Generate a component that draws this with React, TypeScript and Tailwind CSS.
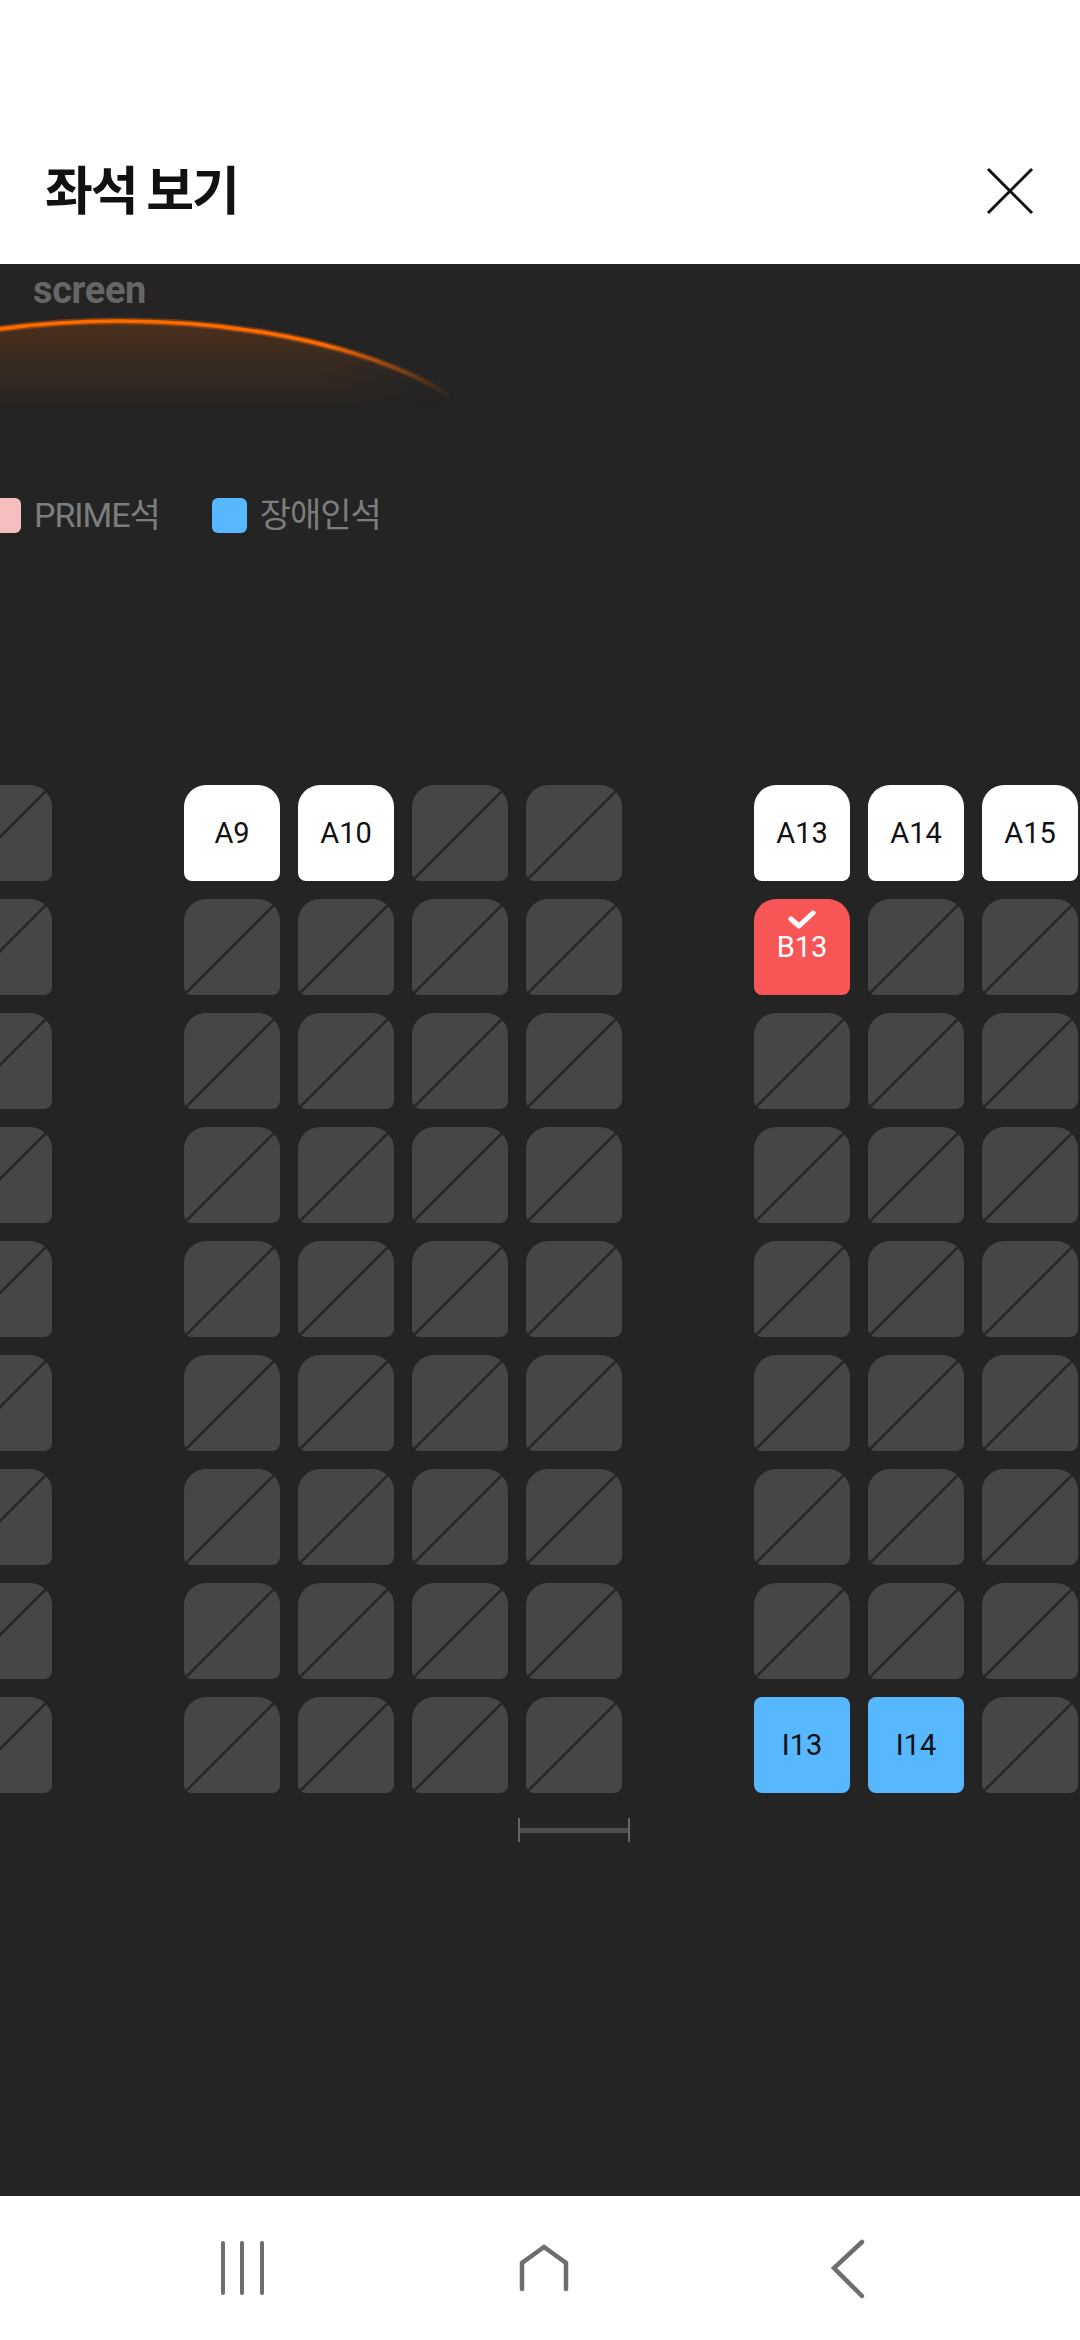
import { useState } from "react";

type SeatState = "off" | "open" | "picked" | "wheel";

const ROWS = ["A", "B", "C", "D", "E", "F", "G", "H", "I"];
// null = aisle slot
const COLS: (number | null)[] = [8, null, 9, 10, 11, 12, null, 13, 14, 15];

const OPEN = ["A9", "A10", "A13", "A14", "A15"];
const WHEEL = ["I13", "I14"];

function stateOf(id: string, picked: string[]): SeatState {
  if (picked.includes(id)) return "picked";
  if (WHEEL.includes(id)) return "wheel";
  if (OPEN.includes(id)) return "open";
  return "off";
}

function Seat({ id, state, onPick }: { id: string; state: SeatState; onPick: (id: string) => void }) {
  if (state === "off") {
    return (
      <div className="relative h-[96px] w-[96px] shrink-0 overflow-hidden rounded-t-[22px] rounded-b-[8px] bg-[#464646]">
        <svg className="absolute inset-0" width="96" height="96" viewBox="0 0 96 96">
          <line x1="0" y1="96" x2="96" y2="0" stroke="#262626" strokeWidth="2.5" />
        </svg>
      </div>
    );
  }

  if (state === "picked") {
    return (
      <button
        onClick={() => onPick(id)}
        className="flex h-[96px] w-[96px] shrink-0 flex-col items-center rounded-t-[22px] rounded-b-[8px] bg-[#f85656] pt-[10px] text-white"
      >
        <svg width="30" height="20" viewBox="0 0 30 20">
          <path d="M4 10 L12 17 L26 4" fill="none" stroke="#fff" strokeWidth="5" strokeLinecap="round" strokeLinejoin="round" />
        </svg>
        <span className="mt-[4px] text-[29px] leading-[28px]">{id}</span>
      </button>
    );
  }

  return (
    <button
      onClick={() => onPick(id)}
      className={`flex h-[96px] w-[96px] shrink-0 items-center justify-center text-[29px] leading-[28px] text-[#111] ${
        state === "wheel" ? "rounded-[8px] bg-[#57b8ff]" : "rounded-t-[22px] rounded-b-[8px] bg-white"
      }`}
    >
      {id}
    </button>
  );
}

function ScreenArc() {
  return (
    <svg className="block" width="540" height="106" viewBox="0 0 540 106">
      <defs>
        <linearGradient id="fadeX" x1="0" y1="0" x2="540" y2="0" gradientUnits="userSpaceOnUse">
          <stop offset="0" stopColor="#fff" />
          <stop offset="0.6" stopColor="#fff" />
          <stop offset="0.84" stopColor="#000" />
        </linearGradient>
        <mask id="fadeMask">
          <rect x="0" y="0" width="540" height="106" fill="url(#fadeX)" />
        </mask>
        <linearGradient id="glow" x1="0" y1="12" x2="0" y2="104" gradientUnits="userSpaceOnUse">
          <stop offset="0" stopColor="#ff6a00" stopOpacity="0.18" />
          <stop offset="1" stopColor="#ff6a00" stopOpacity="0" />
        </linearGradient>
      </defs>
      <g mask="url(#fadeMask)">
        <ellipse cx="120" cy="183" rx="400" ry="171" fill="url(#glow)" />
        <ellipse cx="120" cy="183" rx="400" ry="171" fill="none" stroke="#ff6a00" strokeOpacity="0.35" strokeWidth="7" />
        <ellipse cx="120" cy="183" rx="400" ry="171" fill="none" stroke="#ff6a00" strokeWidth="3.5" />
      </g>
    </svg>
  );
}

export default function App() {
  const [picked, setPicked] = useState<string[]>(["B13"]);

  const toggle = (id: string) =>
    setPicked((prev) => (prev.includes(id) ? prev.filter((p) => p !== id) : [...prev, id]));

  return (
    <div className="flex h-[2340px] w-[1080px] flex-col overflow-hidden bg-white font-['Roboto','Noto_Sans_CJK_KR',sans-serif]">
      {/* Header */}
      <div className="flex h-[264px] shrink-0 items-center justify-between pt-[112px] pl-[45px] pr-[46px]">
        <h1 className="font-['Noto_Sans_CJK_KR',sans-serif] text-[52px] font-bold leading-none tracking-[-0.04em] text-[#111]">
          좌석 보기
        </h1>
        <button aria-label="close" className="mt-[6px]">
          <svg width="48" height="48" viewBox="0 0 48 48">
            <path d="M2 2 L46 46 M46 2 L2 46" stroke="#111" strokeWidth="3" />
          </svg>
        </button>
      </div>

      {/* Seat map */}
      <div className="flex-1 overflow-hidden bg-[#242424]">
        <div className="pt-[7px] pl-[33px] text-[38px] font-bold leading-none tracking-[-0.01em] text-[#666]">
          screen
        </div>
        <ScreenArc />

        {/* Legend */}
        <div className="-ml-[14px] mt-[83px] flex h-[35px] items-center text-[34px] tracking-[-0.03em] text-[#7d7d7d]">
          <span className="h-[35px] w-[35px] shrink-0 rounded-[6px] bg-[#f6bfbf]" />
          <span className="ml-[13px]">PRIME석</span>
          <span className="ml-[52px] h-[35px] w-[35px] shrink-0 rounded-[6px] bg-[#57b8ff]" />
          <span className="ml-[13px]">장애인석</span>
        </div>

        {/* Seats */}
        <div className="-ml-[44px] mt-[252px] flex flex-col gap-[18px]">
          {ROWS.map((row) => (
            <div key={row} className="flex gap-[18px]">
              {COLS.map((num, i) =>
                num === null ? (
                  <div key={"gap" + i} className="h-[96px] w-[96px] shrink-0" />
                ) : (
                  <Seat key={row + num} id={row + num} state={stateOf(row + num, picked)} onPick={toggle} />
                )
              )}
            </div>
          ))}
        </div>

        {/* Scale marker */}
        <div className="ml-[518px] mt-[25px] flex h-[24px] w-[112px] items-center">
          <span className="h-full w-[2px] bg-[#666]" />
          <span className="h-[5px] flex-1 bg-[#4e4e4e]" />
          <span className="h-full w-[2px] bg-[#666]" />
        </div>
      </div>

      {/* Navigation bar */}
      <div className="flex h-[144px] shrink-0 items-center bg-white pl-[219px]">
        <svg width="48" height="56" viewBox="0 0 48 56">
          <path d="M4 3 V53 M23 3 V53 M43 3 V53" stroke="#6e6e6e" strokeWidth="4" strokeLinecap="round" />
        </svg>
        <svg className="ml-[251px]" width="52" height="50" viewBox="0 0 52 50">
          <path d="M4 46 V20 L26 4 L48 20 V46" fill="none" stroke="#6e6e6e" strokeWidth="4.5" strokeLinecap="round" />
        </svg>
        <svg className="ml-[258px]" width="40" height="64" viewBox="0 0 40 64">
          <path d="M34 6 L6 32 L34 60" fill="none" stroke="#6e6e6e" strokeWidth="4.5" strokeLinecap="round" />
        </svg>
      </div>
    </div>
  );
}
